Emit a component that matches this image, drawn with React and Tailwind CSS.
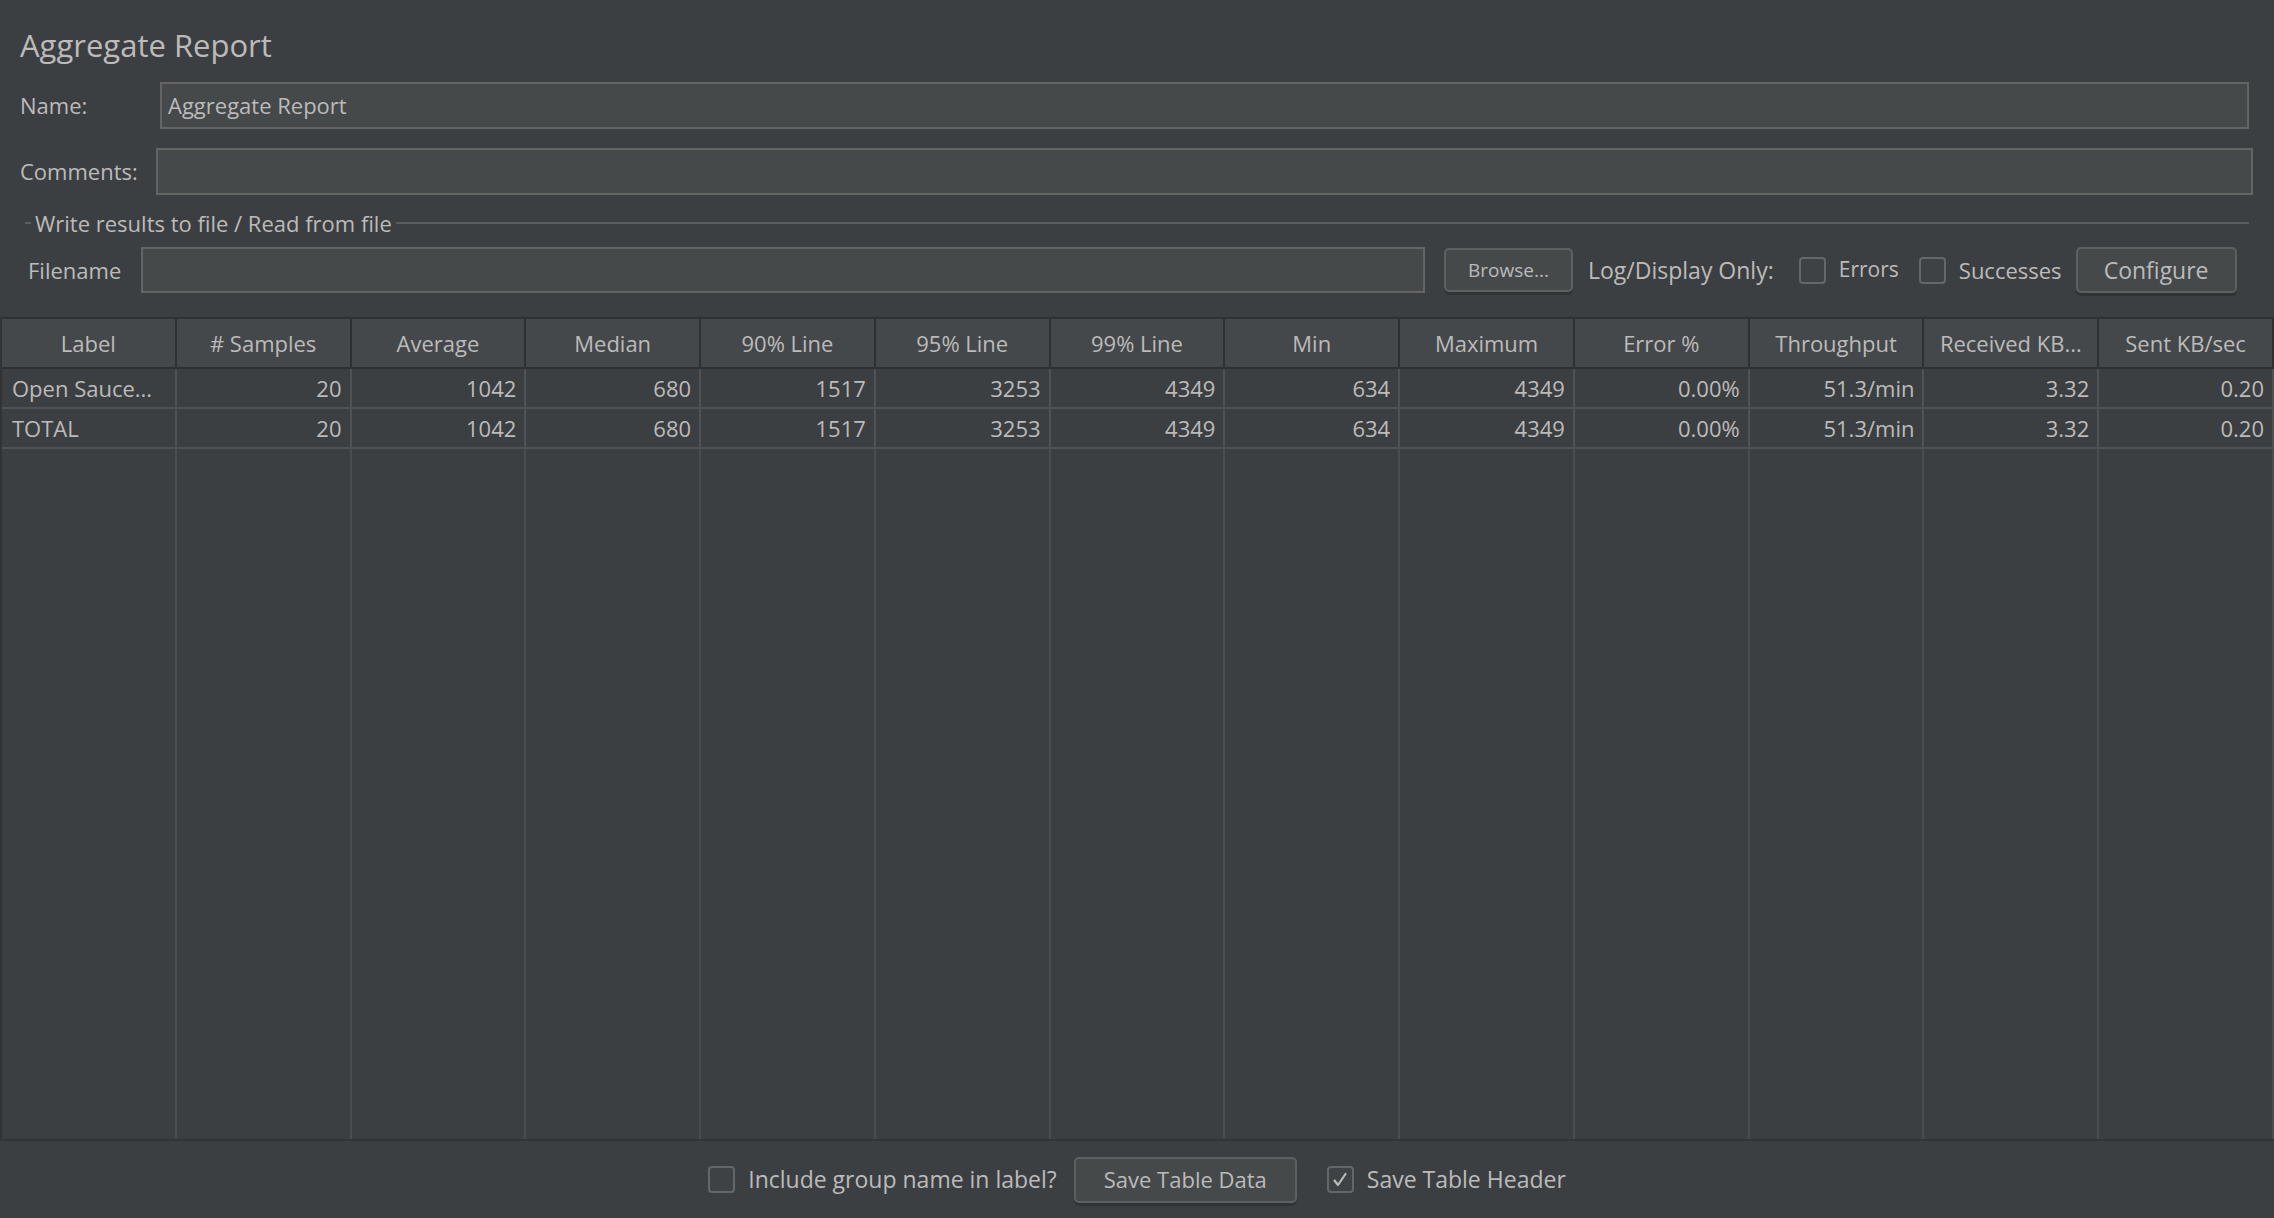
import React from "react";

const columns = [
    "Label",
    "# Samples",
    "Average",
    "Median",
    "90% Line",
    "95% Line",
    "99% Line",
    "Min",
    "Maximum",
    "Error %",
    "Throughput",
    "Received KB...",
    "Sent KB/sec",
];

const rows = [
    ["Open Sauce...", "20", "1042", "680", "1517", "3253", "4349", "634", "4349", "0.00%", "51.3/min", "3.32", "0.20"],
    ["TOTAL", "20", "1042", "680", "1517", "3253", "4349", "634", "4349", "0.00%", "51.3/min", "3.32", "0.20"],
];

const Checkbox = ({ checked }) => (
    <span className="flex h-[27px] w-[27px] shrink-0 items-center justify-center rounded-[4px] border-2 border-[#63676a] bg-[#3f4244]">
        {checked && (
            <svg width="18" height="18" viewBox="0 0 18 18" fill="none">
                <path d="M3.5 9.5 L7 14 L14.5 3" stroke="#bbbbbb" strokeWidth="2.2" strokeLinecap="round" strokeLinejoin="round" />
            </svg>
        )}
    </span>
);

const Button = ({ children, className }) => (
    <button
        className={`rounded-[5px] border-2 border-[#5c6063] bg-[#45494a] text-[#bbbbbb] shadow-[0_3px_0_#313335] ${className}`}
    >
        {children}
    </button>
);

const App = () => {
    return (
        <div className="flex h-[1218px] w-full flex-col overflow-hidden bg-[#3c3f41] font-['Open_Sans',sans-serif] text-[#bbbbbb]">
            <div className="h-[82px] pl-[20px] pt-[25px] text-[31px] leading-[40px]">Aggregate Report</div>

            <div className="flex h-[47px] items-center pl-[20px] pr-[25px] text-[22px]">
                <div className="w-[140px]">Name:</div>
                <div className="flex h-full flex-1 items-center border-2 border-[#646464] bg-[#45494a] pl-[6px]">
                    Aggregate Report
                </div>
            </div>

            <div className="mt-[19px] flex h-[47px] items-center pl-[20px] pr-[21px] text-[22px]">
                <div className="w-[136px]">Comments:</div>
                <div className="h-full flex-1 border-2 border-[#646464] bg-[#45494a]"></div>
            </div>

            <div className="mt-[14px] flex h-[28px] items-center pl-[25px] pr-[25px] text-[22px] leading-[28px]">
                <div className="w-[6px] border-t-2 border-[#5a5d60]"></div>
                <div className="px-[4px]">Write results to file / Read from file</div>
                <div className="flex-1 border-t-2 border-[#5a5d60]"></div>
            </div>

            <div className="mt-[10px] flex h-[46px] items-center pl-[28px] text-[22px]">
                <div className="w-[113px]">Filename</div>
                <div className="h-full w-[1284px] border-2 border-[#646464] bg-[#45494a]"></div>
                <Button className="ml-[19px] h-[44px] w-[129px] text-[19px]">Browse...</Button>
                <div className="ml-[15px] text-[23px]">Log/Display Only:</div>
                <div className="ml-[25px] flex items-center gap-[13px] text-[21px]">
                    <Checkbox />
                    <span>Errors</span>
                </div>
                <div className="ml-[20px] flex items-center gap-[13px] text-[22px]">
                    <Checkbox />
                    <span>Successes</span>
                </div>
                <Button className="ml-[14px] h-[46px] w-[161px] text-[23px]">Configure</Button>
            </div>

            <div className="mt-[24px] flex h-[824px] flex-col border-l-2 border-t-2 border-b-2 border-l-[#313335] border-t-[#2f3133] border-b-[#323436] text-[22px]">
                <div className="grid h-[50px] grid-cols-13 border-b-2 border-[#2e3032] bg-[#45484a]">
                    {columns.map(col => (
                        <div key={col} className="flex items-center justify-center border-r-2 border-[#2e3032] whitespace-nowrap">
                            {col}
                        </div>
                    ))}
                </div>

                {rows.map((row, i) => (
                    <div key={i} className="grid h-[40px] grid-cols-13 border-b-2 border-[#4f5254]">
                        {row.map((cell, j) => (
                            <div
                                key={j}
                                className={`flex items-center border-r-2 border-[#4f5254] whitespace-nowrap ${j === 0 ? "pl-[10px]" : "justify-end pr-[8px]"}`}
                            >
                                {cell}
                            </div>
                        ))}
                    </div>
                ))}

                <div className="grid flex-1 grid-cols-13">
                    {columns.map(col => (
                        <div key={col} className="border-r-2 border-[#4a4d50]"></div>
                    ))}
                </div>
            </div>

            <div className="flex flex-1 items-center justify-center text-[23px]">
                <Checkbox />
                <span className="ml-[13px]">Include group name in label?</span>
                <Button className="ml-[17px] h-[46px] w-[223px] text-[22px]">Save Table Data</Button>
                <span className="ml-[30px]">
                    <Checkbox checked />
                </span>
                <span className="ml-[13px]">Save Table Header</span>
            </div>
        </div>
    );
};

export default App;
